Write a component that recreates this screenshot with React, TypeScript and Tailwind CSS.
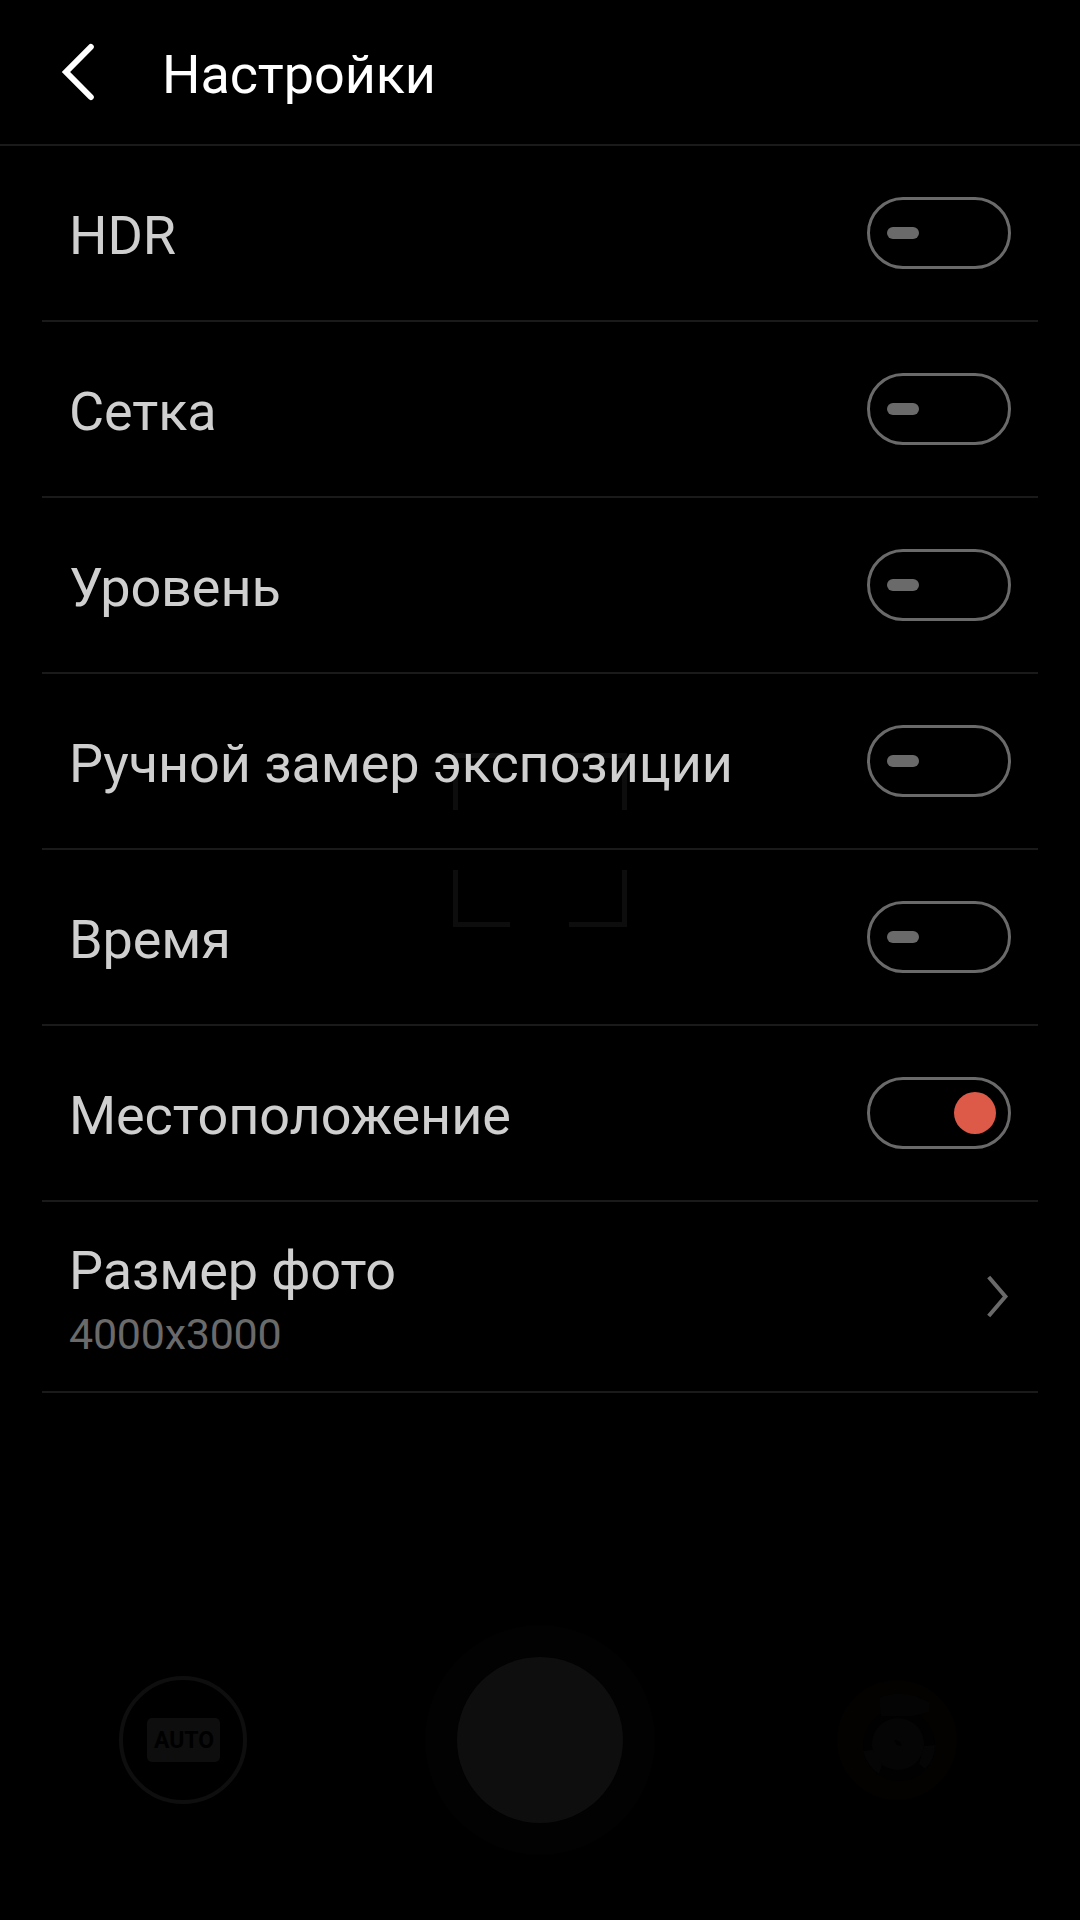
import { useState } from "react";
import clsx from "clsx";

interface ToggleItem {
  id: string;
  label: string;
  enabled: boolean;
}

const initialItems: ToggleItem[] = [
  { id: "hdr", label: "HDR", enabled: false },
  { id: "grid", label: "Сетка", enabled: false },
  { id: "level", label: "Уровень", enabled: false },
  { id: "metering", label: "Ручной замер экспозиции", enabled: false },
  { id: "time", label: "Время", enabled: false },
  { id: "location", label: "Местоположение", enabled: true },
];

function Toggle({
  label,
  checked,
  onChange,
}: {
  label: string;
  checked: boolean;
  onChange: () => void;
}) {
  return (
    <button
      type="button"
      role="switch"
      aria-checked={checked}
      aria-label={label}
      onClick={onChange}
      className={clsx(
        "flex h-[72px] w-36 items-center rounded-full border-[3px] border-[#6a6a6a]",
        checked ? "justify-end pr-3" : "justify-start pl-[17px]"
      )}
    >
      {checked ? (
        <span className="size-[42px] rounded-full bg-[#dd5a49]" />
      ) : (
        <span className="h-3 w-8 rounded-full bg-[#6a6a6a]" />
      )}
    </button>
  );
}

// Camera screen that stays dimly visible under the settings
function CameraBackdrop() {
  return (
    <div className="absolute inset-0" aria-hidden="true">
      <svg
        className="absolute left-[453px] top-[753px]"
        width="174"
        height="174"
        fill="none"
        stroke="#0d0d0d"
        strokeWidth="5"
      >
        <path d="M2.5 57V2.5H57M116 2.5h55.5V57M171.5 117v54.5H116M57 171.5H2.5V117" />
      </svg>

      <div className="absolute left-[119px] top-[1676px] flex size-32 items-center justify-center rounded-full border-4 border-[#0e0e0e]">
        <span className="flex h-11 w-[73px] items-center justify-center rounded-[5px] bg-[#0e0e0e] pl-0.5 text-[23px] font-bold leading-none text-black">
          AUTO
        </span>
      </div>

      <div className="absolute left-[425px] top-[1625px] flex size-[230px] items-center justify-center rounded-full bg-[#020202]">
        <span className="size-[166px] rounded-full bg-[#0e0e0e]" />
      </div>

      {/* last shot */}
      <svg
        className="absolute left-[837px] top-[1680px]"
        width="120"
        height="120"
        viewBox="0 0 120 120"
      >
        <circle cx="60" cy="60" r="60" fill="#030200" />
        <circle cx="62" cy="65" r="36" fill="#010101" />
        <path d="M42 18Q60 10 78 16L92 22V32L76 36H44Z" fill="#040404" />
        <path d="M26 71L36 70L45 85L42 94Q30 86 26 71Z" fill="#050505" />
        <path d="M98 65L87 66L82 84L88 89Q98 80 98 65Z" fill="#050505" />
        <circle cx="61" cy="64" r="26" fill="#050505" />
        <path d="M57 60l5 1 3 5-5-1z" fill="#010101" />
      </svg>
    </div>
  );
}

export default function App() {
  const [items, setItems] = useState(initialItems);

  const handleToggle = (id: string) => {
    setItems((prev) =>
      prev.map((item) =>
        item.id === id ? { ...item, enabled: !item.enabled } : item
      )
    );
  };

  return (
    <div className="relative h-[1920px] w-[1080px] overflow-hidden bg-black font-['Roboto','Noto_Sans',sans-serif]">
      <CameraBackdrop />

      <div className="relative flex flex-col">
        <header className="flex h-[146px] items-center border-b-2 border-[#1a1a1a] pl-[60px]">
          <button type="button" aria-label="Назад">
            <svg
              width="36"
              height="60"
              viewBox="0 0 36 60"
              fill="none"
              stroke="#fff"
              strokeWidth="6"
              strokeLinecap="round"
            >
              <path d="M30.8 5L6 30L30.8 55" />
            </svg>
          </button>
          <h1 className="ml-[66px] pt-[5px] text-[54px] leading-none tracking-[-0.1px] text-white">
            Настройки
          </h1>
        </header>

        <ul className="mx-[42px]">
          {items.map((item) => (
            <li
              key={item.id}
              className="flex h-44 items-center justify-between border-b-2 border-[#1a1a1a] pl-[27px] pr-[27px]"
            >
              <span className="pt-[5px] text-[54px] leading-none tracking-[-0.1px] text-[#cfcfcf]">
                {item.label}
              </span>
              <Toggle
                label={item.label}
                checked={item.enabled}
                onChange={() => handleToggle(item.id)}
              />
            </li>
          ))}

          <li className="flex h-[191px] items-center justify-between border-b-2 border-[#1a1a1a] pl-[27px] pr-[29px]">
            <div className="flex flex-col gap-[15px] pt-[7px]">
              <span className="text-[54px] leading-none tracking-[-0.1px] text-[#cfcfcf]">
                Размер фото
              </span>
              <span className="text-[43px] leading-none tracking-[-0.25px] text-[#6a6a6a]">
                4000x3000
              </span>
            </div>
            <svg
              width="24"
              height="45"
              viewBox="0 0 24 45"
              fill="none"
              stroke="#6a6a6a"
              strokeWidth="4"
            >
              <path d="M3.7 3L20.4 22.5L3.7 42" />
            </svg>
          </li>
        </ul>
      </div>
    </div>
  );
}
